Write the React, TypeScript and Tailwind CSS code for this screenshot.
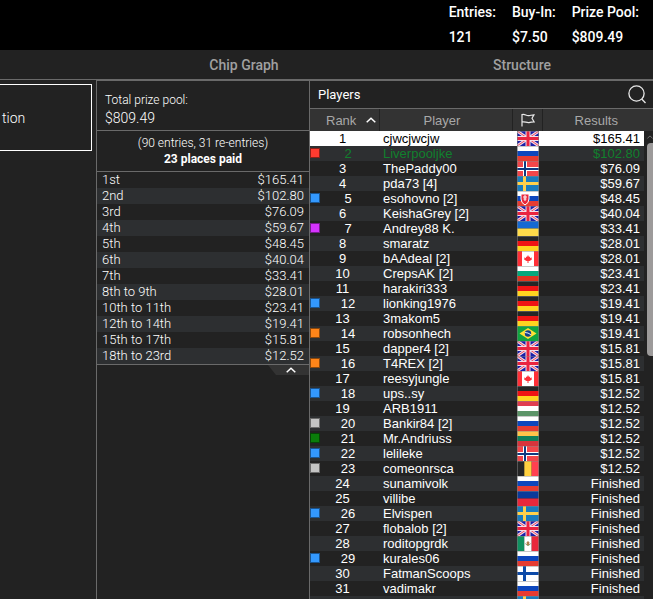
import type { ReactNode } from "react";
import clsx from "clsx";

const SUMMARY = [
  { label: "Entries:", value: "121" },
  { label: "Buy-In:", value: "$7.50" },
  { label: "Prize Pool:", value: "$809.49" },
];

const PRIZES = [
  ["1st", "$165.41"],
  ["2nd", "$102.80"],
  ["3rd", "$76.09"],
  ["4th", "$59.67"],
  ["5th", "$48.45"],
  ["6th", "$40.04"],
  ["7th", "$33.41"],
  ["8th to 9th", "$28.01"],
  ["10th to 11th", "$23.41"],
  ["12th to 14th", "$19.41"],
  ["15th to 17th", "$15.81"],
  ["18th to 23rd", "$12.52"],
];

const SWATCHES = {
  red: "bg-[#ff3b30] border-[#8a1f18]",
  blue: "bg-[#3399ff] border-[#1a5591]",
  purple: "bg-[#d633ff] border-[#761c8c]",
  orange: "bg-[#ff8519] border-[#8c480c]",
  gray: "bg-[#c4c4c4] border-[#6b6b6b]",
  green: "bg-[#0a7d0a] border-[#064506]",
};

type Country =
  | "gb" | "ru" | "no" | "se" | "sk" | "ua" | "de" | "ca" | "bg"
  | "br" | "hu" | "lt" | "be" | "li" | "mx" | "fi";

type Player = {
  name: string;
  flag: Country;
  result: string;
  tag?: keyof typeof SWATCHES;
};

const PLAYERS: Player[] = [
  { name: "cjwcjwcjw", flag: "gb", result: "$165.41" },
  { name: "Liverpooljke", flag: "ru", result: "$102.80", tag: "red" },
  { name: "ThePaddy00", flag: "no", result: "$76.09" },
  { name: "pda73 [4]", flag: "se", result: "$59.67" },
  { name: "esohovno [2]", flag: "sk", result: "$48.45", tag: "blue" },
  { name: "KeishaGrey [2]", flag: "gb", result: "$40.04" },
  { name: "Andrey88 K.", flag: "ua", result: "$33.41", tag: "purple" },
  { name: "smaratz", flag: "de", result: "$28.01" },
  { name: "bAAdeal [2]", flag: "ca", result: "$28.01" },
  { name: "CrepsAK [2]", flag: "bg", result: "$23.41" },
  { name: "harakiri333", flag: "de", result: "$23.41" },
  { name: "lionking1976", flag: "de", result: "$19.41", tag: "blue" },
  { name: "3makom5", flag: "de", result: "$19.41" },
  { name: "robsonhech", flag: "br", result: "$19.41", tag: "orange" },
  { name: "dapper4 [2]", flag: "gb", result: "$15.81" },
  { name: "T4REX [2]", flag: "gb", result: "$15.81", tag: "orange" },
  { name: "reesyjungle", flag: "ca", result: "$15.81" },
  { name: "ups..sy", flag: "de", result: "$12.52", tag: "blue" },
  { name: "ARB1911", flag: "hu", result: "$12.52" },
  { name: "Bankir84 [2]", flag: "ru", result: "$12.52", tag: "gray" },
  { name: "Mr.Andriuss", flag: "lt", result: "$12.52", tag: "green" },
  { name: "lelileke", flag: "no", result: "$12.52", tag: "blue" },
  { name: "comeonrsca", flag: "be", result: "$12.52", tag: "gray" },
  { name: "sunamivolk", flag: "ru", result: "Finished" },
  { name: "villibe", flag: "li", result: "Finished" },
  { name: "Elvispen", flag: "se", result: "Finished", tag: "blue" },
  { name: "flobalob [2]", flag: "gb", result: "Finished" },
  { name: "roditopgrdk", flag: "mx", result: "Finished" },
  { name: "kurales06", flag: "ru", result: "Finished", tag: "blue" },
  { name: "FatmanScoops", flag: "fi", result: "Finished" },
  { name: "vadimakr", flag: "ru", result: "Finished" },
];

function rows(...colors: string[]) {
  const h = 15 / colors.length;
  return colors.map((c, i) => <rect key={i} y={i * h} width="22" height={h} fill={c} />);
}

function cols(...colors: string[]) {
  const w = 22 / colors.length;
  return colors.map((c, i) => <rect key={i} x={i * w} width={w} height="15" fill={c} />);
}

function nordic(field: string, cross: string, inner?: string) {
  return (
    <>
      <rect width="22" height="15" fill={field} />
      <path d={inner ? "M8 0v15M0 8h22" : "M7.5 0v15M0 7.5h22"} stroke={cross} strokeWidth={inner ? 4 : 3} />
      {inner && <path d="M8 0v15M0 8h22" stroke={inner} strokeWidth="2" />}
    </>
  );
}

const FLAGS: Record<Country, ReactNode> = {
  gb: (
    <>
      <rect width="22" height="15" fill="#1b1fa8" />
      <path d="M0 0l22 15M22 0L0 15" stroke="#f3dfe8" strokeWidth="3" />
      <path d="M0 0l22 15M22 0L0 15" stroke="#ee4a62" strokeWidth="1" />
      <path d="M11 0v15M0 7.5h22" stroke="#f3dfe8" strokeWidth="5" />
      <path d="M11 0v15M0 7.5h22" stroke="#ea2440" strokeWidth="3" />
    </>
  ),
  ru: rows("#ffffff", "#0d47bd", "#e63c32"),
  no: nordic("#f2464a", "#ffffff", "#103a80"),
  se: nordic("#1a7cbd", "#ffd04a"),
  fi: nordic("#ffffff", "#0d4aa8"),
  sk: (
    <>
      {rows("#ffffff", "#0d47bd", "#e63c32")}
      <path d="M4 3h8v5q0 4-4 6q-4-2-4-6z" fill="#e8283c" stroke="#fff" />
      <path d="M8 4v6M6 6h4M6.500 8h3" stroke="#fff" />
    </>
  ),
  ua: rows("#1569d2", "#ffdb4a"),
  de: rows("#262626", "#f01414", "#ffd420"),
  ca: (
    <>
      <rect width="22" height="15" fill="#fff" />
      <path d="M0 0h5v15H0zM17 0h5v15h-5z" fill="#ff3038" />
      <path d="M11 4l1 2 1-.5v1.500l2-.5-.5 1.500.5.5-2.500 1.500h-1V12h-1v-2h-1L7 8.500l.5-.5L7 6.500l2 .5V5.500l1 .5z" fill="#ff3038" />
    </>
  ),
  bg: rows("#ffffff", "#05a87c", "#df3420"),
  br: (
    <>
      <rect width="22" height="15" fill="#10a440" />
      <path d="M11 2l8.500 5.500L11 13 2.500 7.500z" fill="#ffe135" />
      <circle cx="11" cy="7.500" r="3.200" fill="#12408a" />
      <path d="M8 6.500q3 0 6 2.200" stroke="#dfe9f5" fill="none" />
    </>
  ),
  hu: rows("#e03c50", "#ffffff", "#5c9468"),
  lt: rows("#ffc44a", "#10805a", "#d8343c"),
  be: cols("#262626", "#ffd040", "#ff4050"),
  li: rows("#0b3a9a", "#e8283c"),
  mx: (
    <>
      {cols("#109060", "#ffffff", "#e8283c")}
      <path d="M8.500 7.500q2.500 4 5 0" stroke="#7d9a68" fill="none" />
      <path d="M11 5l1.500 1.500L12 9h-2l-.5-2.500z" fill="#b08050" />
    </>
  ),
};

function Flag({ country }: { country: Country }) {
  return (
    <svg width="22" height="15" viewBox="0 0 22 15" className="block" role="img" aria-label={country}>
      {FLAGS[country]}
      <path d="M.5 0v15M21.500 0v15" stroke="#777" strokeOpacity=".6" />
      <path d="M0 .5h22" stroke="#888" strokeOpacity=".45" />
    </svg>
  );
}

function Caret() {
  return (
    <svg width="10" height="6" viewBox="0 0 10 6" fill="none" stroke="currentColor" strokeWidth="1.500" aria-hidden>
      <path d="M.7 5.200L5 1.200l4.300 4" />
    </svg>
  );
}

function PrizePanel() {
  return (
    <section className="w-[213px] shrink-0 border-l border-[#6a6a6a] font-light">
      <div className="border-b border-[#6a6a6a] px-2 pt-2.5 pb-[3px] leading-[18px]">
        <p className="text-xs leading-[18px]">Total prize pool:</p>
        <p className="text-sm leading-[18px]">$809.49</p>
      </div>
      <div className="border-b border-[#6a6a6a] py-1 text-center text-xs leading-4">
        <p>(90 entries, 31 re-entries)</p>
        <p className="font-bold">23 places paid</p>
      </div>
      <table className="w-full border-b border-[#6a6a6a] text-[13px] leading-4">
        <tbody>
          {PRIZES.map(([place, prize]) => (
            <tr key={place} className="even:bg-[#2d2f31]">
              <td className="pl-[5px]">{place}</td>
              <td className="pr-[5px] text-right">{prize}</td>
            </tr>
          ))}
        </tbody>
      </table>
      <button
        type="button"
        aria-label="Collapse prizes"
        className="ml-auto flex h-[10px] w-[41px] items-center justify-center bg-[#333] pl-1 [clip-path:polygon(0_0,100%_0,100%_100%,8px_100%)]"
      >
        <Caret />
      </button>
    </section>
  );
}

function PlayersTable() {
  return (
    <div className="relative min-h-0 flex-1 overflow-hidden font-['Liberation_Sans',Arial,sans-serif] text-[13px]">
      <table className="w-full table-fixed">
        <colgroup>
          <col className="w-[69px]" />
          <col />
          <col className="w-[30px]" />
          <col className="w-[101px]" />
          <col className="w-[9px]" />
        </colgroup>
        <thead className="bg-[#333] text-[#a8a8a8]">
          <tr className="h-[22px]">
            <th className="border-r border-[#222] p-0 font-normal">
              <button type="button" className="flex w-full items-center gap-2.5 pl-4 leading-[15px]">
                Rank
                <span className="text-white">
                  <Caret />
                </span>
              </button>
            </th>
            <th className="border-r border-[#222] p-0 pr-2 leading-[15px] font-normal">Player</th>
            <th className="border-r border-[#222] p-0" aria-label="Country">
              <svg width="14" height="14" viewBox="0 0 14 14" fill="none" stroke="#e8e8e8" strokeWidth="1.200" className="mx-auto">
                <path d="M1 1v12.500M1 1.600c3-1.300 4 1.500 7 1 2-.3 3-.7 5-.8l-2 3.500 2 3.500c-2 0-3 .6-5 .8-3 .3-4-1.500-7-.6" />
              </svg>
            </th>
            <th colSpan={2} className="p-0 pr-1 leading-[15px] font-normal">
              Results
            </th>
          </tr>
        </thead>
        <tbody className="leading-[15px]">
          {PLAYERS.map((p, i) => {
            const bg = i === 0 ? "bg-white" : i % 2 ? "bg-[#2d2f31]" : "bg-[#222]";
            return (
              <tr key={p.name} className={clsx("h-[15px]", i === 0 && "text-black", i === 1 && "text-[#11802d]")}>
                <td className={clsx("p-0", bg)}>
                  <div className="flex items-start pr-1">
                    {p.tag && <span className={clsx("mt-0.5 mr-px size-2.5 shrink-0 border", SWATCHES[p.tag])} />}
                    <span className="flex-1 text-center">{i + 1}</span>
                  </div>
                </td>
                <td className={clsx("truncate p-0 pl-1", bg)}>{p.name}</td>
                <td className={clsx("p-0 pl-1", bg)}>
                  <Flag country={p.flag} />
                </td>
                <td className={clsx("p-0 pr-1 text-right", bg)}>{p.result}</td>
                <td className="p-0" />
              </tr>
            );
          })}
          <tr className="h-[15px]">
            <td colSpan={2} className="bg-[#2d2f31] p-0" />
            <td className="bg-[#2d2f31] p-0 pl-1">
              <Flag country="se" />
            </td>
            <td className="bg-[#2d2f31] p-0" />
            <td className="p-0" />
          </tr>
        </tbody>
      </table>

      {/* scroll bar, laid over the empty last column */}
      <div className="absolute top-[22px] right-0 bottom-0 w-[6px] overflow-hidden" aria-hidden>
        <div className="flex h-3 items-center text-[#777]">
          <Caret />
        </div>
        <div className="h-[213px] rounded-l-sm bg-[#9c9a9a]" />
      </div>
    </div>
  );
}

export default function App() {
  return (
    <main className="flex h-screen flex-col overflow-hidden bg-[#222] font-['Roboto',sans-serif] text-white">
      <header className="bg-black pr-3.5">
        <dl className="flex justify-end gap-4 text-sm leading-[25px] font-medium">
          {SUMMARY.map((s) => (
            <div key={s.label}>
              <dt>{s.label}</dt>
              <dd>{s.value}</dd>
            </div>
          ))}
        </dl>
      </header>

      <nav className="grid grid-cols-[105fr_278fr_270fr] pt-0.5 text-sm leading-[27px] font-medium text-[#a0a0a0]">
        <span />
        <button type="button">Chip Graph</button>
        <button type="button" className="pl-2">
          Structure
        </button>
      </nav>

      <div className="flex min-h-0 flex-1 border-t border-[#6a6a6a]">
        <aside className="w-24 shrink-0 pt-1 pr-1">
          <button
            type="button"
            className="block h-[67px] w-full border border-l-0 border-white pl-0.5 text-left text-sm font-light"
          >
            tion
          </button>
        </aside>

        <div className="flex min-w-0 flex-1 border-t border-[#6a6a6a]">
          <PrizePanel />

          <section className="flex min-w-0 flex-1 flex-col border-l border-[#6a6a6a]">
            <div className="flex h-7 items-center justify-between border-b border-[#6a6a6a] pr-[7px] pl-2">
              <h2 className="text-[13px]">Players</h2>
              <button type="button" aria-label="Search players">
                <svg width="18" height="19" viewBox="0 0 18 19" fill="none" stroke="#e8e8e8" strokeWidth="1.300">
                  <circle cx="8.500" cy="8.500" r="7.600" />
                  <path d="M13.700 14l3.800 4" />
                </svg>
              </button>
            </div>
            <PlayersTable />
          </section>
        </div>
      </div>
    </main>
  );
}
